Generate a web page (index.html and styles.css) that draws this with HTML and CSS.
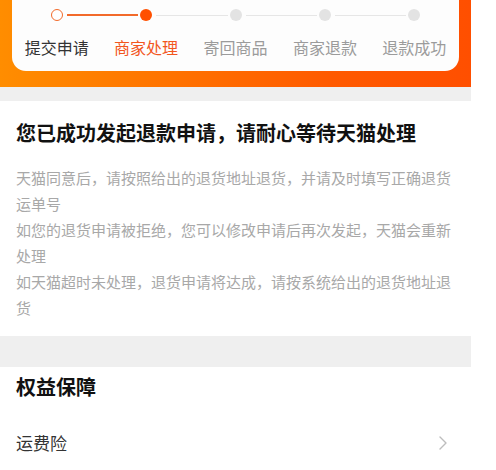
FILE: index.html
```html
<!DOCTYPE html>
<html lang="zh-CN">
<head>
  <meta charset="UTF-8" />
  <meta name="viewport" content="width=device-width, initial-scale=1.0"/>
  <title>退款详情</title>
  <link rel="stylesheet" href="styles.css">
</head>
<body>
  <div class="page">

    <header class="banner">
      <div class="progress-card">
        <div class="dots">
          <span class="dot done"></span>
          <span class="line active"></span>
          <span class="dot current"></span>
          <span class="line"></span>
          <span class="dot"></span>
          <span class="line"></span>
          <span class="dot"></span>
          <span class="line"></span>
          <span class="dot"></span>
        </div>
        <div class="labels">
          <span class="label done">提交申请</span>
          <span class="label current">商家处理</span>
          <span class="label">寄回商品</span>
          <span class="label">商家退款</span>
          <span class="label">退款成功</span>
        </div>
      </div>
    </header>

    <div class="gap small"></div>

    <section class="status">
      <h2>您已成功发起退款申请，请耐心等待天猫处理</h2>
      <p>天猫同意后，请按照给出的退货地址退货，并请及时填写正确退货<br>运单号</p>
      <p>如您的退货申请被拒绝，您可以修改申请后再次发起，天猫会重新<br>处理</p>
      <p>如天猫超时未处理，退货申请将达成，请按系统给出的退货地址退<br>货</p>
    </section>

    <div class="gap"></div>

    <section class="rights">
      <h3>权益保障</h3>
      <div class="row">
        <span>运费险</span>
        <svg class="chevron" width="8" height="14" viewBox="0 0 8 14">
          <path d="M1 1 L7 7 L1 13" fill="none" stroke="#bdbdbd" stroke-width="1.4" stroke-linecap="round" stroke-linejoin="round"/>
        </svg>
      </div>
    </section>

  </div>
</body>
</html>
```

FILE: styles.css
```css
body {
  margin: 0;
  background: #fff;
  font-family: "Noto Sans CJK SC", "Noto Sans", sans-serif;
  color: #111;
}

.page {
  width: 471px;
}

.banner {
  background: linear-gradient(90deg, #ff8d00, #ff5a00 70%, #ff4f00);
  height: 87px;
  padding: 0 12px;
  box-sizing: border-box;
}

.progress-card {
  background: #fdfdfd;
  border-radius: 0 0 14px 14px;
  height: 71px;
  padding-top: 9px;
  box-sizing: border-box;
}

.dots {
  display: flex;
  align-items: center;
  padding: 0 39px;
  height: 12px;
}

.dot {
  width: 12px;
  height: 12px;
  border-radius: 50%;
  background: #e3e3e3;
  flex: none;
  box-sizing: border-box;
}

.dot.done {
  background: #fff;
  border: 1.5px solid #f26a2a;
}

.dot.current {
  background: #ff5000;
}

.line {
  flex: 1;
  height: 1px;
  background: #e6e6e6;
  margin: 0 2px 0 4px;
}

.line.active {
  height: 1.5px;
  background: #f26a2a;
}

.labels {
  display: grid;
  grid-template-columns: repeat(5, 1fr);
  margin-top: 15px;
}

.label {
  text-align: center;
  font-size: 16px;
  line-height: 22px;
  color: #9b9b9b;
}

.label.done {
  color: #333;
}

.label.current {
  color: #f2561d;
}

.gap {
  background: #efefef;
  height: 31px;
}

.gap.small {
  height: 14px;
}

.status {
  padding: 18px 9px 15px 16px;
}

.status h2 {
  margin: 0 0 18px;
  font-size: 20px;
  line-height: 28px;
  font-weight: bold;
}

.status p {
  margin: 0;
  font-size: 15px;
  line-height: 26px;
  color: #a8a8a8;
  white-space: nowrap;
}

.rights {
  padding: 6px 16px 0;
}

.rights h3 {
  margin: 0;
  font-size: 20px;
  line-height: 28px;
  font-weight: bold;
}

.row {
  display: flex;
  justify-content: space-between;
  align-items: center;
  margin-top: 30px;
  padding-right: 8px;
  font-size: 17px;
  line-height: 24px;
  color: #333;
}
```
